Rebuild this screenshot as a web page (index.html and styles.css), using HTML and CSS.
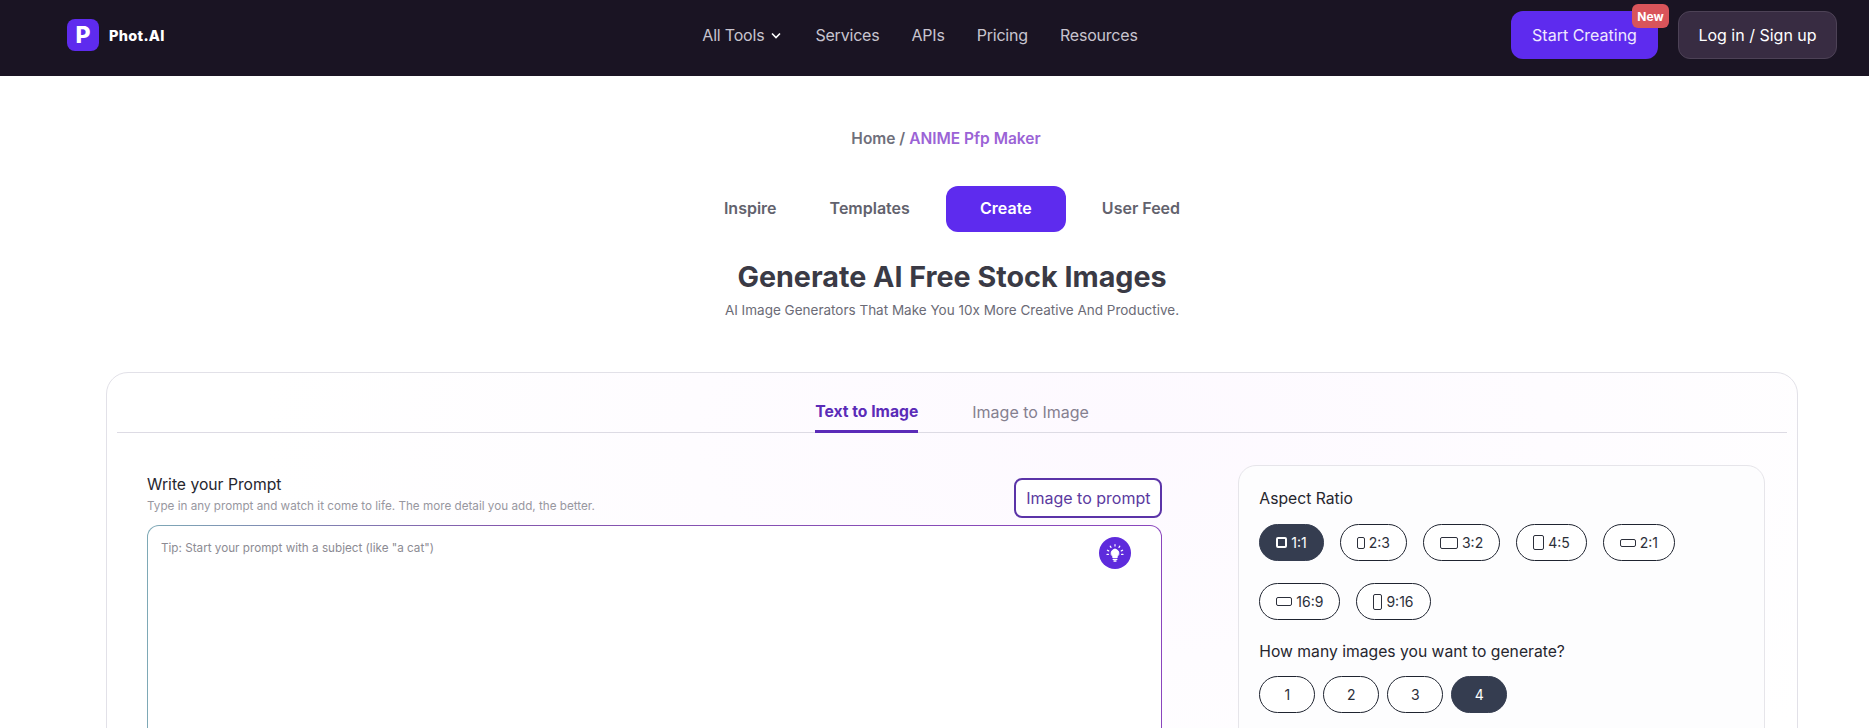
FILE: index.html
```html
<!DOCTYPE html>
<html lang="en">
    <head>
        <title>ANIME Pfp Maker - Phot.AI</title>
        <meta charset="UTF-8">
        <meta name="viewport" content="width=device-width, initial-scale=1">
        <link rel="stylesheet" href="styles.css">
    </head>
    <body>
        <div class="page">
            <header class="topbar">
                <a class="logo" href="#">
                    <span class="logo-mark">P</span>
                    <span class="logo-name">Phot.AI</span>
                </a>

                <nav class="mainnav">
                    <a href="#">All Tools
                        <svg width="14" height="14" viewBox="0 0 14 14"><path d="M3 5.5 7 9.5l4-4" fill="none" stroke="#fff" stroke-width="1.6"/></svg>
                    </a>
                    <a href="#">Services</a>
                    <a href="#">APIs</a>
                    <a href="#">Pricing</a>
                    <a href="#">Resources</a>
                </nav>

                <div class="actions">
                    <a class="btn btn-start" href="#">Start Creating <span class="badge">New</span></a>
                    <a class="btn btn-login" href="#">Log in / Sign up</a>
                </div>
            </header>

            <section class="hero">
                <p class="crumbs">Home / <span>ANIME Pfp Maker</span></p>
                <div class="modes">
                    <a href="#">Inspire</a>
                    <a href="#">Templates</a>
                    <a href="#" class="active">Create</a>
                    <a href="#">User Feed</a>
                </div>
                <h1>Generate AI Free Stock Images</h1>
                <p class="lead">AI Image Generators That Make You 10x More Creative And Productive.</p>
            </section>

            <main class="card">
                <div class="tabs">
                    <a href="#" class="active">Text to Image</a>
                    <a href="#">Image to Image</a>
                </div>

                <div class="columns">
                    <div class="prompt">
                        <div class="prompt-head">
                            <div>
                                <h2>Write your Prompt</h2>
                                <p>Type in any prompt and watch it come to life. The more detail you add, the better.</p>
                            </div>
                            <button class="outline">Image to prompt</button>
                        </div>
                        <div class="promptbox">
                            <span>Tip: Start your prompt with a subject (like "a cat")</span>
                            <button class="bulb">
                                <svg width="22" height="22" viewBox="0 0 22 22" fill="none" stroke="#fff" stroke-linecap="round">
                                    <path d="M11 7.2a4 4 0 0 0-2.3 7.2v1.1h4.6v-1.1A4 4 0 0 0 11 7.2z" fill="#fff"/>
                                    <path d="M9.2 17.4h3.6M10 19h2" stroke-width="1.3"/>
                                    <path d="M11 2.6v1.5M6.2 4.2l.8 1.2M15.8 4.2 15 5.4M3.4 8.2l1.3.7M18.6 8.2l-1.3.7M3 12.4h1.4M19 12.4h-1.4" stroke-width="1.2"/>
                                </svg>
                            </button>
                        </div>
                    </div>

                    <aside class="options">
                        <h3>Aspect Ratio</h3>
                        <div class="chips ratios">
                            <button class="chip on"><i class="shape s11"></i>1:1</button>
                            <button class="chip"><i class="shape s23"></i>2:3</button>
                            <button class="chip"><i class="shape s32"></i>3:2</button>
                            <button class="chip"><i class="shape s45"></i>4:5</button>
                            <button class="chip"><i class="shape s21"></i>2:1</button>
                            <button class="chip"><i class="shape s169"></i>16:9</button>
                            <button class="chip"><i class="shape s916"></i>9:16</button>
                        </div>

                        <h3 class="count-title">How many images you want to generate?</h3>
                        <div class="chips counts">
                            <button class="chip">1</button>
                            <button class="chip">2</button>
                            <button class="chip">3</button>
                            <button class="chip on">4</button>
                        </div>
                    </aside>
                </div>
            </main>
        </div>
    </body>
</html>
```

FILE: styles.css
```css
* {
    box-sizing: border-box;
}

html, body {
    margin: 0;
    height: 100%;
}

body {
    font-family: 'Inter', 'Open Sans', sans-serif;
    color: #3a3a45;
    background-color: #fff;
}

a {
    color: inherit;
    text-decoration: none;
}

button {
    font-family: inherit;
    cursor: pointer;
}

.page {
    height: 728px;
    overflow: hidden;
}

/* top bar */
.topbar {
    height: 76px;
    padding: 0 32px 6px 67px;
    background-color: #1a1423;
    display: grid;
    grid-template-columns: 1fr auto 1fr;
    align-items: center;
}

.logo {
    display: flex;
    align-items: center;
    gap: 10px;
}

.logo-mark {
    width: 32px;
    height: 32px;
    border-radius: 8px;
    background-color: #5e2bee;
    color: #fff;
    font-size: 23px;
    font-weight: 800;
    display: flex;
    align-items: center;
    justify-content: center;
}

.logo-name {
    color: #fff;
    font-size: 14.5px;
    font-weight: 800;
    letter-spacing: .3px;
}

.mainnav {
    display: flex;
    gap: 32px;
    margin-right: 64px;
    color: #c8c4cf;
    font-size: 16px;
}

.mainnav a {
    display: flex;
    align-items: center;
    gap: 5px;
    letter-spacing: -.2px;
}

.actions {
    display: flex;
    justify-content: flex-end;
    gap: 20px;
}

.btn {
    height: 48px;
    border-radius: 12px;
    color: #fff;
    font-size: 16px;
    display: flex;
    align-items: center;
    justify-content: center;
}

.btn-start {
    position: relative;
    width: 147px;
    background-color: #5e2bee;
    color: #efe8ff;
}

.btn-login {
    width: 159px;
    background-color: #382c42;
    border: 1px solid #4d4256;
}

.badge {
    position: absolute;
    top: -7px;
    right: -11px;
    width: 37px;
    height: 24px;
    border-radius: 6px;
    background-color: #d9545a;
    color: #fff;
    font-size: 12px;
    font-weight: 700;
    display: flex;
    align-items: center;
    justify-content: center;
}

/* intro */
.hero {
    padding: 0 71px 0 106px;
    text-align: center;
}

.crumbs {
    margin: 52px 12px 0 0;
    line-height: 22px;
    font-size: 15.5px;
    font-weight: 600;
    color: #6f6f7b;
}

.crumbs span {
    color: #9b63d6;
}

.modes {
    margin-top: 36px;
    display: flex;
    justify-content: center;
    align-items: center;
    gap: 36px;
    color: #62626d;
    font-size: 16px;
    font-weight: 600;
}

.modes a {
    line-height: 44px;
    padding-bottom: 2px;
}

.modes a:first-child {
    margin-right: 17px;
}

.modes .active {
    width: 120px;
    border-radius: 12px;
    background-color: #5e2bee;
    color: #fff;
}

h1 {
    margin: 26px 0 0;
    font-size: 28.7px;
    line-height: 38px;
    font-weight: 700;
    color: #3a3a45;
}

.lead {
    margin: 4px 0 0;
    font-size: 13.5px;
    line-height: 20px;
    color: #6b6b76;
}

/* generator card */
.card {
    margin: 52px 71px 0 106px;
    height: 600px;
    padding: 0 10px;
    border: 1px solid #e2e1e8;
    border-radius: 22px;
    background: radial-gradient(ellipse at 60% 10%, #fdf9ff 0, #fff 60%);
}

.tabs {
    height: 60px;
    border-bottom: 1px solid #dddbe4;
    display: flex;
    justify-content: center;
    gap: 54px;
    padding-top: 29px;
    font-size: 16px;
    color: #85808f;
}

.tabs a {
    height: 31px;
}

.tabs .active {
    border-bottom: 3px solid #5b2bb8;
    color: #5b2bb8;
    font-size: 15.7px;
    font-weight: 700;
}

.columns {
    display: flex;
    gap: 76px;
    padding: 32px 22px 0 30px;
    align-items: flex-start;
}

.prompt {
    width: 1016px;
    padding-top: 9px;
}

.prompt-head {
    display: flex;
    justify-content: space-between;
    align-items: flex-end;
}

h2, h3 {
    margin: 0;
    font-size: 15.7px;
    line-height: 22px;
    font-weight: 400;
    color: #26262e;
}

.prompt-head p {
    margin: 2px 0 4px;
    font-size: 11.7px;
    line-height: 16px;
    color: #98979f;
}

.outline {
    width: 148px;
    height: 40px;
    padding: 0;
    border: 2px solid #5b34a8;
    border-radius: 8px;
    background-color: #fff;
    color: #5b3aa0;
    font-size: 16px;
}

.promptbox {
    position: relative;
    height: 400px;
    margin-top: 7px;
    padding: 14px 13px;
    border: 1px solid transparent;
    border-radius: 12px;
    background: linear-gradient(#fff, #fff) padding-box, linear-gradient(to right, #7ea9b6, #8457ad 35%, #8a45bd) border-box;
    font-size: 11.7px;
    line-height: 16px;
    color: #8c8b93;
}

.bulb {
    position: absolute;
    top: 11px;
    right: 30px;
    width: 32px;
    height: 32px;
    padding: 0;
    border: none;
    border-radius: 50%;
    background-color: #5e2bdc;
    display: flex;
    align-items: center;
    justify-content: center;
}

.options {
    width: 527px;
    height: 400px;
    padding: 22px 20px;
    border: 1px solid #e6e5ea;
    border-radius: 18px;
    background-color: #fdfdfe;
}

.chips {
    display: flex;
    flex-wrap: wrap;
}

.ratios {
    margin-top: 14px;
    gap: 22px 16px;
}

.count-title {
    margin-top: 21px;
}

.counts {
    margin-top: 13px;
    gap: 8px;
}

.chip {
    height: 37px;
    padding: 0 16px;
    border: 1px solid #1f2430;
    border-radius: 19px;
    background-color: #fff;
    color: #2c2f3a;
    font-size: 14px;
    display: flex;
    align-items: center;
    justify-content: center;
    gap: 4px;
}

.counts .chip {
    width: 56px;
}

.chip.on {
    background-color: #353d50;
    border-color: #353d50;
    color: #fff;
}

.shape {
    display: block;
    border: 1px solid #2c2f3a;
    border-radius: 2px;
}

.chip.on .shape {
    border: 2px solid #fff;
}

.s11 { width: 11px; height: 11px; }
.s23 { width: 8px; height: 12px; }
.s32 { width: 18px; height: 12px; }
.s45 { width: 11px; height: 15px; }
.s21 { width: 16px; height: 8px; }
.s169 { width: 16px; height: 9px; }
.s916 { width: 9px; height: 16px; }
```
